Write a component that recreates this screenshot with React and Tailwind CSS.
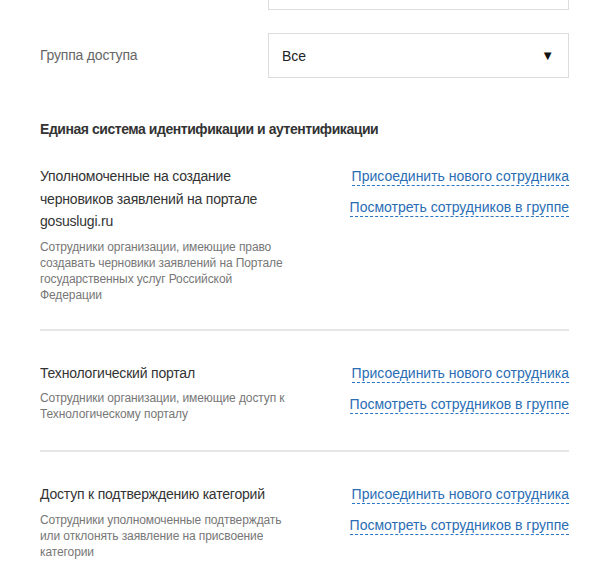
import React from "react";

const items = [
  {
    title: ["Уполномоченные на создание", "черновиков заявлений на портале", "gosuslugi.ru"],
    desc: "Сотрудники организации, имеющие право создавать черновики заявлений на Портале государственных услуг Российской Федерации",
  },
  {
    title: ["Технологический портал"],
    desc: "Сотрудники организации, имеющие доступ к Технологическому порталу",
  },
  {
    title: ["Доступ к подтверждению категорий"],
    desc: "Сотрудники уполномоченные подтверждать или отклонять заявление на присвоение категории",
  },
];

function Link({ children }) {
  return (
    <span className="text-[14px] leading-[17px] text-[#2a6db5] border-b border-dashed border-[#2a76c6] cursor-pointer">
      {children}
    </span>
  );
}

export default function App() {
  return (
    <div
      className="w-[608px] h-[564px] overflow-hidden bg-white pl-[40px] pr-[39px]"
      style={{ fontFamily: '"Liberation Sans", Arial, sans-serif' }}
    >
      <div className="flex">
        <div className="w-[228px]" />
        <div className="w-[301px] h-[10px] border-x border-b border-[#dcdcdc]" />
      </div>
      <div className="flex items-center mt-[23px]">
        <div className="w-[228px] text-[14px] text-[#666] tracking-[-0.2px]">Группа доступа</div>
        <div className="w-[301px] h-[45px] border border-[#dcdcdc] flex items-center justify-between pl-[13px] pr-[14px]">
          <span className="text-[14px] text-[#222] mt-[1px]">Все</span>
          <span className="text-[13px] text-[#111]">▼</span>
        </div>
      </div>
      <div className="mt-[42px] text-[14px] leading-[18px] font-bold text-[#333] tracking-[-0.45px]">
        Единая система идентификации и аутентификации
      </div>
      {items.map((it, i) => (
        <div key={i}>
          <div className={`flex justify-between ${i === 0 ? "mt-[27px]" : "mt-[31px]"} ${i === 0 ? "pb-[26px]" : ""} ${i === 1 ? "pb-[28px]" : ""} ${i < 2 ? "border-b-2 border-[#e6e6e6]" : ""}`}>
            <div className="w-[252px]">
              <div className="text-[14px] leading-[22.5px] text-[#333] tracking-[-0.2px]">
                {it.title.map((t, j) => (
                  <div key={j}>{t}</div>
                ))}
              </div>
              <div className="mt-[6px] text-[12px] leading-[16px] text-[#777] tracking-[-0.1px]">{it.desc}</div>
            </div>
            <div className="flex flex-col items-end gap-[13px] pt-[3px]">
              <Link>Присоединить нового сотрудника</Link>
              <Link>Посмотреть сотрудников в группе</Link>
            </div>
          </div>
        </div>
      ))}
    </div>
  );
}
